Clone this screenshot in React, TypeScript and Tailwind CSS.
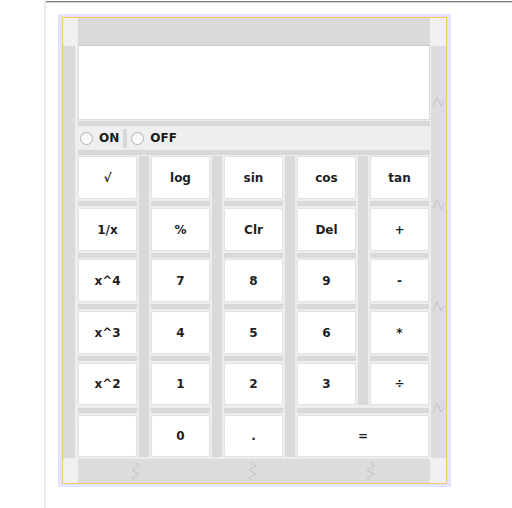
const font = "font-['DejaVu_Sans',sans-serif]";

type Cell = { label: string; pos: string };

const keys: Cell[] = [
  { label: "√", pos: "col-start-1 row-start-1" },
  { label: "log", pos: "col-start-3 row-start-1" },
  { label: "sin", pos: "col-start-5 row-start-1" },
  { label: "cos", pos: "col-start-7 row-start-1" },
  { label: "tan", pos: "col-start-9 row-start-1" },
  { label: "1/x", pos: "col-start-1 row-start-3" },
  { label: "%", pos: "col-start-3 row-start-3" },
  { label: "Clr", pos: "col-start-5 row-start-3" },
  { label: "Del", pos: "col-start-7 row-start-3" },
  { label: "+", pos: "col-start-9 row-start-3" },
  { label: "x^4", pos: "col-start-1 row-start-5" },
  { label: "7", pos: "col-start-3 row-start-5" },
  { label: "8", pos: "col-start-5 row-start-5" },
  { label: "9", pos: "col-start-7 row-start-5" },
  { label: "-", pos: "col-start-9 row-start-5" },
  { label: "x^3", pos: "col-start-1 row-start-7" },
  { label: "4", pos: "col-start-3 row-start-7" },
  { label: "5", pos: "col-start-5 row-start-7" },
  { label: "6", pos: "col-start-7 row-start-7" },
  { label: "*", pos: "col-start-9 row-start-7" },
  { label: "x^2", pos: "col-start-1 row-start-9" },
  { label: "1", pos: "col-start-3 row-start-9" },
  { label: "2", pos: "col-start-5 row-start-9" },
  { label: "3", pos: "col-start-7 row-start-9" },
  { label: "÷", pos: "col-start-9 row-start-9" },
  { label: "", pos: "col-start-1 row-start-11" },
  { label: "0", pos: "col-start-3 row-start-11" },
  { label: ".", pos: "col-start-5 row-start-11" },
  { label: "=", pos: "col-start-7 col-span-3 row-start-11" },
];

// vertical separators between columns
const vBars = [
  "col-start-2 row-start-1 row-span-11",
  "col-start-4 row-start-1 row-span-11",
  "col-start-6 row-start-1 row-span-11",
  "col-start-8 row-start-1 row-span-9",
];

// horizontal separators between rows
const hBars = [
  "col-start-1 row-start-2", "col-start-3 row-start-2", "col-start-5 row-start-2", "col-start-7 row-start-2", "col-start-9 row-start-2",
  "col-start-1 row-start-4", "col-start-3 row-start-4", "col-start-5 row-start-4", "col-start-7 row-start-4", "col-start-9 row-start-4",
  "col-start-1 row-start-6", "col-start-3 row-start-6", "col-start-5 row-start-6", "col-start-7 row-start-6", "col-start-9 row-start-6",
  "col-start-1 row-start-8", "col-start-3 row-start-8", "col-start-5 row-start-8", "col-start-7 row-start-8", "col-start-9 row-start-8",
  "col-start-1 row-start-10", "col-start-3 row-start-10", "col-start-5 row-start-10", "col-start-7 col-span-3 row-start-10",
];

function Radio({ label }: { label: string }) {
  return (
    <div className="flex items-center gap-[6px]">
      <span className="w-[13px] h-[13px] rounded-full border border-[#b4b4b4] bg-gradient-to-b from-[#f4f4f4] to-white" />
      <span className={`${font} text-[12px] font-bold text-[#1a1a1a]`}>{label}</span>
    </div>
  );
}

function Strip() {
  return (
    <div className="h-[7px] flex flex-col justify-center bg-[#ececec]">
      <div className="h-[5px] bg-[#d8d8d8]" />
    </div>
  );
}

export default function App() {
  return (
    <div className="w-[512px] h-[508px] bg-white flex">
      <div className="w-[44px]" />
      <div className="w-[2px] h-full bg-[#ebebeb]" />
      <div className="flex-1 flex flex-col">
        <div className="mt-[1px] h-[1px] bg-[#7c7c7c]" />
        <div className="h-[1px] bg-[#d0d0d0]" />
        <div className="ml-[12px] mt-[11px] w-[393px] px-[4px] py-[3px] bg-[#e4e4fc]">
          <div className="border border-[#f6c56e] grid grid-cols-[15px_352px_16px] grid-rows-[28px_412px_25px]">
            {/* header row */}
            <div className="bg-[#f0f0f0]" />
            <div className="bg-[#dadada] border-b border-[#cacaca]" />
            <div className="bg-[#f0f0f0]" />

            {/* left bar */}
            <div className="flex">
              <div className="w-[12px] bg-[#dadada]" />
              <div className="flex-1 bg-[#ededed]" />
            </div>

            {/* main area */}
            <div className="flex flex-col bg-[#ededed]">
              <div className="h-[74px] bg-white border border-t-0 border-[#dcdcdc]" />
              <Strip />
              <div className="h-[22px] bg-[#efefef] flex items-center pl-[2px]">
                <Radio label="ON" />
                <div className="ml-[4px] mr-[4px] w-[4px] h-[19px] bg-[#d8d8d8]" />
                <Radio label="OFF" />
              </div>
              <Strip />
              <div className="grid grid-cols-[59px_14px_59px_14px_59px_14px_59px_14px_59px] grid-rows-[43px_9px_43px_8px_43px_9px_43px_9px_42px_10px_42px]">
                {vBars.map((p) => (
                  <div key={p} className={`${p} mx-[2px] bg-[#d9d9d9]`} />
                ))}
                {hBars.map((p) => (
                  <div key={p} className={`${p} self-center h-[5px] bg-[#d9d9d9]`} />
                ))}
                {keys.map((k) => (
                  <div
                    key={k.pos}
                    className={`${k.pos} bg-white border border-[#e2e2e2] rounded-[2px] flex items-center justify-center ${font} text-[12px] font-bold text-[#1e1e1e]`}
                  >
                    {k.label}
                  </div>
                ))}
              </div>
            </div>

            {/* right bar */}
            <div className="bg-[#dcdcdc] border-l border-[#eeeeee]">
              <svg width="15" height="412" className="block">
                {[51, 154, 256, 357].map((y) => (
                  <polyline
                    key={y}
                    points={`2,${y + 9} 6,${y} 10,${y + 9} 13,${y + 4}`}
                    fill="none"
                    stroke="#c4c4c4"
                    strokeWidth="1"
                  />
                ))}
              </svg>
            </div>

            {/* bottom row */}
            <div className="bg-[#f0f0f0]" />
            <div className="bg-[#dcdcdc] border-t border-[#ececec]">
              <svg width="352" height="24" className="block">
                {[57, 174, 292].map((x) => (
                  <polyline
                    key={x}
                    points={`${x},3 ${x + 4},7 ${x - 3},11 ${x + 4},15 ${x - 3},19 ${x},22`}
                    fill="none"
                    stroke="#c2c2c2"
                    strokeWidth="1"
                  />
                ))}
              </svg>
            </div>
            <div className="bg-[#f0f0f0]" />
          </div>
        </div>
      </div>
    </div>
  );
}
